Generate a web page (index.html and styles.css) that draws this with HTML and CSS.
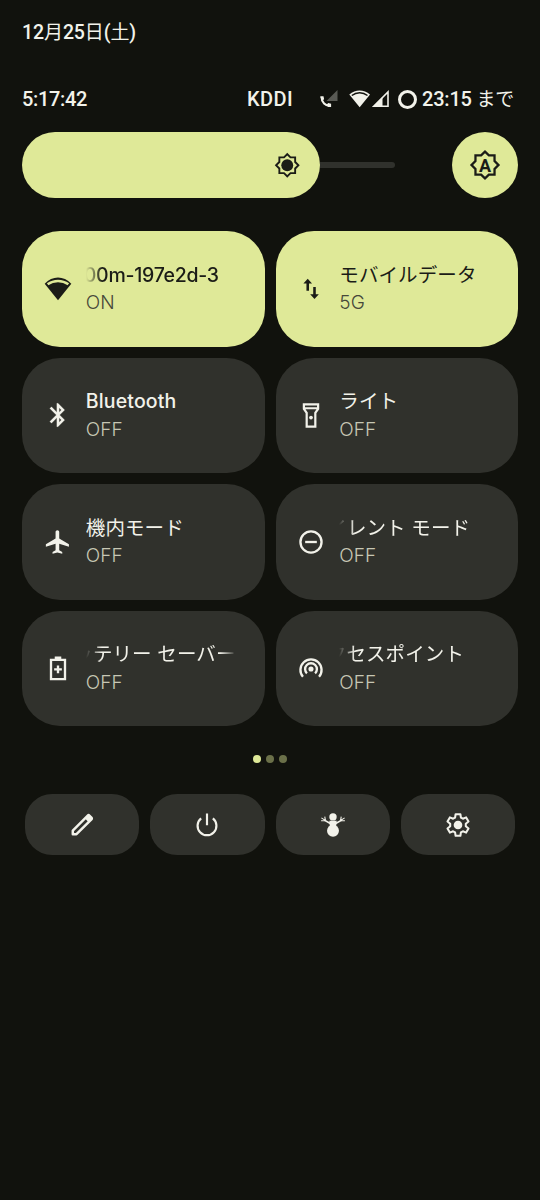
FILE: index.html
```html
<!DOCTYPE html>
<html lang="ja">
<head>
<meta charset="utf-8">
<title>クイック設定</title>
<link rel="stylesheet" href="styles.css">
</head>
<body>
<main class="panel">
  <div class="date">12<span class="kanji">月</span>25<span class="kanji">日</span>(<span class="kanji">土</span>)</div>
  <header class="status">
    <span class="clock">5:17:42</span>
    <span class="carrier">KDDI</span>
    <svg class="call" viewBox="0 0 20 20"><path fill="#595a54" d="M18.500 1v11H7.500z"/><path fill="none" stroke="#f2f2ea" stroke-width="2" stroke-linejoin="round" d="M2.500 8C2.500 13.500 6.500 17 11 17"/><path d="M1.200 7.200h3.300l.6 3-2.200 1.700zM7.600 15.800l1.600-1.800 2.900.7v3.300H9z"/></svg>
    <svg class="net" viewBox="0 0 41 20"><path d="M.3 5.400C6.500.2 14.800.2 21 5.400L10.650 18.200z"/><path fill="none" stroke="#11120d" stroke-width="1.500" d="M2.800 6.500c4.700-3.600 11-3.600 15.700 0"/><path fill="none" stroke="#f2f2ea" stroke-width="1.600" d="M24.800 17.300 39 3v14.300z"/><path d="M23.300 18 33.500 8v10z"/></svg>
    <span class="ring"></span>
    <span class="alarm">23:15 <span class="kanji">まで</span></span>
  </header>

  <section class="brightness">
    <div class="slider">
      <div class="level">
        <svg class="sun" viewBox="0 0 24 24"><path fill-rule="evenodd" d="M20 8.690V4h-4.690L12 .69 8.690 4H4v4.690L.69 12 4 15.310V20h4.690L12 23.310 15.310 20H20v-4.690L23.310 12zM18.300 14.600v3.700h-3.700L12 20.900 9.400 18.300H5.700v-3.700L3.100 12l2.600-2.600V5.700h3.700L12 3.100l2.600 2.600h3.700v3.700l2.600 2.600z"/><circle cx="12" cy="12" r="5.400"/></svg>
      </div>
      <div class="track"></div>
    </div>
    <div class="auto">
      <svg viewBox="0 0 24 24"><path fill-rule="evenodd" d="M20 8.690V4h-4.690L12 .69 8.690 4H4v4.690L.69 12 4 15.310V20h4.690L12 23.310 15.310 20H20v-4.690L23.310 12zM18.300 14.600v3.700h-3.700L12 20.900 9.400 18.300H5.700v-3.700L3.100 12l2.600-2.600V5.700h3.700L12 3.100l2.600 2.600h3.700v3.700l2.600 2.600z"/><text x="12" y="16.900" text-anchor="middle">A</text></svg>
    </div>
  </section>

  <section class="tiles">
    <div class="tile on">
      <svg class="icon" viewBox="0 0 24 24"><path d="M.6 7.400C7.200.4 16.800.4 23.400 7.400L12 21.600z"/><path fill="none" stroke="#dfe998" stroke-width="2.200" d="M3.100 8C8.400 4.100 15.600 4.100 20.900 8"/></svg>
      <div class="label"><div class="window fade"><span class="title ssid">00m-197e2d-3</span></div><div class="state">ON</div></div>
    </div>
    <div class="tile on">
      <svg class="icon" viewBox="0 0 24 24"><path d="M9.200 3.200 5.500 7.200H8.100V13.500H10.300V7.200H12.900zM15 20.600 11.300 16.600H13.900V10.200H16.100V16.600H18.700z"/></svg>
      <div class="label"><div class="window"><span class="title ja">モバイルデータ</span></div><div class="state">5G</div></div>
    </div>
    <div class="tile">
      <svg class="icon" viewBox="0 0 24 24"><path d="M17.710 7.710 12 2h-1v7.590L6.410 5 5 6.410 10.590 12 5 17.590 6.410 19 11 14.410V22h1l5.710-5.710L13.410 12zM13 5.830l1.880 1.880L13 9.590zm1.880 10.460L13 18.170v-3.760z" stroke="#f2f2ea" stroke-width=".2"/></svg>
      <div class="label"><div class="window"><span class="title latin">Bluetooth</span></div><div class="state">OFF</div></div>
    </div>
    <div class="tile">
      <svg class="icon" viewBox="0 0 24 24"><path fill="none" stroke="#f2f2ea" stroke-width="1.900" d="M5.900 2.900h12.200v3.800l-2.400 3.400v11.900H8.300V10.100L5.900 6.700zM6 6.200h12"/><circle cx="12" cy="14.200" r="1.600"/></svg>
      <div class="label"><div class="window"><span class="title ja">ライト</span></div><div class="state">OFF</div></div>
    </div>
    <div class="tile">
      <svg class="icon" viewBox="0 0 24 24"><path d="M21.500 16v-2l-8-5V3.500C13.500 2.670 12.830 2 12 2s-1.500.67-1.500 1.500V9l-8 5v2l8-2.500V19L8 20.500V22l4-1 4 1v-1.500L13.500 19v-5.500z" transform="translate(-1 0) scale(1.040 1)"/></svg>
      <div class="label"><div class="window"><span class="title ja">機内モード</span></div><div class="state">OFF</div></div>
    </div>
    <div class="tile">
      <svg class="icon" viewBox="0 0 24 24"><circle cx="12" cy="12" r="9.050" fill="none" stroke="#f2f2ea" stroke-width="2"/><path d="M7 11h10v2H7z"/></svg>
      <div class="label"><div class="window fade"><span class="title ja silent">イレント モード</span></div><div class="state">OFF</div></div>
    </div>
    <div class="tile">
      <svg class="icon" viewBox="0 0 24 24"><path fill="none" stroke="#f2f2ea" stroke-width="2" d="M6 5h12v16.500H6z"/><path d="M9.200 2.200h5.600v3H9.200zM11 9.900h2v2.300h2.300v2H13v2.300h-2v-2.300H8.700v-2H11z"/></svg>
      <div class="label"><div class="window fade"><span class="title ja battery">ッテリー セーバー</span></div><div class="state">OFF</div></div>
    </div>
    <div class="tile">
      <svg class="icon" viewBox="0 0 24 24"><g fill="none" stroke="#f2f2ea" stroke-width="2"><path d="M5.100 19.300a9.050 9.050 0 1 1 13.800 0" transform="translate(0 .2)"/><path d="M8.500 16.600a5.050 5.050 0 1 1 7 0"/></g><circle cx="12" cy="12.900" r="2.200"/></svg>
      <div class="label"><div class="window fade"><span class="title ja hotspot">クセスポイント</span></div><div class="state">OFF</div></div>
    </div>
  </section>

  <div class="pages"><i class="current"></i><i></i><i></i></div>

  <footer class="actions">
    <div class="action"><svg viewBox="0 0 24 24"><path fill="none" stroke="#f2f2ea" stroke-width="2.300" stroke-linejoin="round" d="M3.500 20.500v-3.400L17.300 3.300c.5-.5 1-.5 1.500 0l1.900 1.900c.5.500.5 1 0 1.500L6.900 20.500z"/><path d="M14.600 5.800 18 2.600 21.400 6 18 9.400z"/></svg></div>
    <div class="action"><svg viewBox="0 0 24 24"><path fill="none" stroke="#f2f2ea" stroke-width="2" d="M12 1.300v11M6.600 5.900a8.700 8.700 0 1 0 10.800 0"/></svg></div>
    <div class="action"><svg viewBox="0 0 24 24"><circle cx="12" cy="4.500" r="3.400"/><path d="M8.600 8h6.800l-.6 6.500H9.200z"/><circle cx="12" cy="17.300" r="5.500"/><path fill="none" stroke="#f2f2ea" stroke-width="1.600" d="M9.500 10.700 4 7.500M14.500 10.700 20 7.500"/><path fill="none" stroke="#f2f2ea" stroke-width="1" d="M5 8H1M4.800 7.700 1.300 5.400M5 7.700 4.400 4.300M19 8h4M19.200 7.700l3.500-2.300M19 7.700l.6-3.400"/></svg></div>
    <div class="action"><svg viewBox="0 0 24 24"><path fill="none" stroke="#f2f2ea" stroke-width="1.900" stroke-linejoin="round" d="M9.800 2h4.400l.5 3.200 1.800 1 3-1.200 2.200 3.800-2.500 2v2.400l2.500 2-2.200 3.800-3-1.200-1.800 1-.5 3.200H9.800l-.5-3.200-1.800-1-3 1.200-2.200-3.800 2.500-2v-2.400l-2.500-2L4.500 5l3 1.200 1.800-1z"/><circle cx="12" cy="12" r="4"/></svg></div>
  </footer>
</main>
</body>
</html>
```

FILE: styles.css
```css
* { box-sizing: border-box; }
body {
  margin: 0;
  background: #11120d;
  color: #f2f2ea;
  font-family: Inter, "Noto Sans CJK JP", sans-serif;
  font-size: 19.5px;
}
svg { display: block; fill: currentColor; flex: none; }
.panel { width: 540px; height: 1200px; padding: 18px 22px 0; overflow: hidden; }
.date { height: 30px; line-height: 30px; font-weight: 500; font-family: Roboto, "Noto Sans CJK JP", sans-serif; font-size: 19.500px; letter-spacing: -.1px; white-space: nowrap; }
.kanji { font-weight: 400; font-size: 19px; }

.status { display: flex; align-items: center; height: 30px; margin-top: 36px; font-family: Roboto, "Noto Sans CJK JP", sans-serif; font-size: 20px; font-weight: 500; line-height: 30px; white-space: nowrap; }
.clock { width: 225px; letter-spacing: -.35px; }
.carrier { width: 72px; letter-spacing: .4px; }
.call { width: 20px; height: 20px; }
.net { width: 41px; height: 20px; margin-left: 9.500px; }
.ring { width: 19px; height: 19px; margin-left: 8.500px; border: 3.600px solid #f2f2ea; border-radius: 50%; }
.alarm { height: 30px; margin-left: 5px; letter-spacing: -.2px; }

.brightness { display: flex; justify-content: space-between; height: 66px; margin-top: 18px; }
.slider { display: flex; align-items: center; width: 372.500px; }
.level { display: flex; align-items: center; justify-content: flex-end; width: 297.500px; height: 66px; padding-right: 19.500px; border-radius: 33px; background: #dfe998; color: #1b1c17; }
.sun { width: 26.500px; height: 26.500px; }
.track { flex: 1; height: 6px; border-radius: 0 3px 3px 0; background: #30312c; }
.auto { display: grid; place-items: center; width: 66px; height: 66px; border-radius: 50%; background: #dfe998; color: #1b1c17; }
.auto svg { width: 32px; height: 32px; }
.auto text { font: 700 13.500px Roboto, sans-serif; }

.tiles { display: grid; grid-template-columns: 1fr 1fr; grid-auto-rows: 115.500px; gap: 11px; margin-top: 33px; }
.tile { display: flex; align-items: center; gap: 14px; padding-left: 21.800px; border-radius: 38px; background: #30312c; }
.tile.on { background: #dfe998; color: #1b1c17; }
.icon { width: 28px; height: 28px; }
.label { width: 150px; padding-top: 1px; line-height: 28.400px; white-space: nowrap; }
.window { height: 28.400px; overflow: hidden; }
.fade { -webkit-mask-image: linear-gradient(90deg, transparent, #000 16px, #000 134px, transparent 150px); mask-image: linear-gradient(90deg, transparent, #000 16px, #000 134px, transparent 150px); }
.title { display: inline-block; font-weight: 500; }
.latin { letter-spacing: .15px; }
.ja { font-weight: 400; letter-spacing: .1px; }
.ssid { margin-left: -2px; letter-spacing: -.27px; }
.silent { margin-left: -12px; }
.battery { margin-left: -12.500px; }
.hotspot { margin-left: -12.500px; }
.state { font-size: 19px; font-weight: 300; letter-spacing: .1px; color: #c7c7b4; }
.on .state { color: #46483a; }

.pages { display: flex; justify-content: center; gap: 5px; margin-top: 29px; }
.pages i { width: 8px; height: 8px; border-radius: 50%; background: #6b7049; }
.pages .current { background: #dfe998; }

.actions { display: grid; grid-template-columns: repeat(4, 1fr); gap: 11px; margin: 31.300px 3px 0; }
.action { display: grid; place-items: center; height: 61px; border-radius: 27px; background: #30312c; }
.action svg { width: 26px; height: 26px; }
```
